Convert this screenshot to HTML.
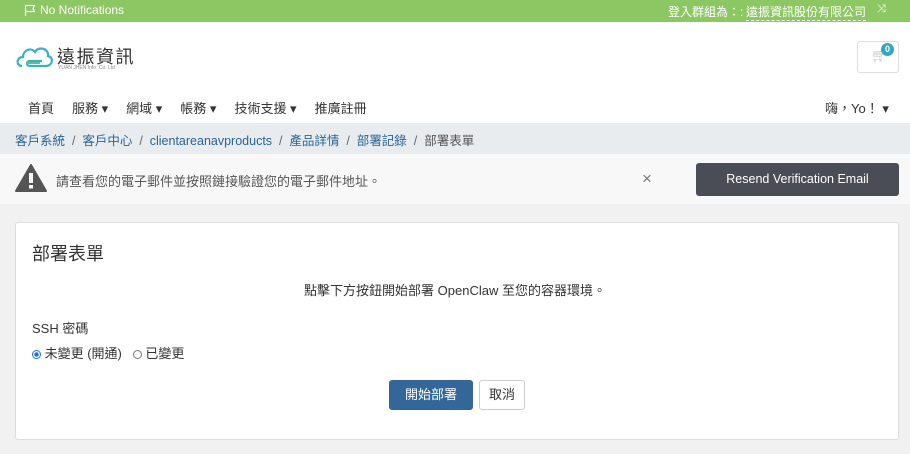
<!DOCTYPE html>
<html><head><meta charset="utf-8"><style>
*{box-sizing:border-box;margin:0;padding:0}
body{width:910px;height:454px;overflow:hidden;background:#f1f1f1;font-family:"Liberation Sans","Noto Sans CJK TC",sans-serif;font-size:13px;color:#333;position:relative}
.abs{position:absolute}
</style></head><body>
<div class="abs" style="left:0;top:0;width:910px;height:22px;background:#8dc763;color:#fff;font-size:12px">
 <svg class="abs" style="left:24px;top:4px" width="12" height="13" viewBox="0 0 12 13"><path d="M1.5 1v11M1.5 1.5h9l-1.5 3 1.5 3h-9" fill="none" stroke="#fff" stroke-width="1.2"/></svg>
 <span class="abs" style="left:40px;top:3px">No Notifications</span>
 <span class="abs" style="left:668px;top:3px">登入群組為：:</span>
 <span class="abs" style="left:746px;top:3px;border-bottom:1px dashed #fff">遠振資訊股份有限公司</span>
 <span class="abs" style="left:877px;top:3px;font-size:11px">⤨</span>
</div>
<div class="abs" style="left:0;top:22px;width:910px;height:101px;background:#fff"></div>
<svg class="abs" style="left:16px;top:44px" width="38" height="26" viewBox="0 0 38 26"><path d="M6 22 C0 22 0 13 7 13 C7 6 15 3 19 8 C22 2 33 4 32 12 C38 13 37 22 30 22 H14 C10 22 10 17 14 17 H26" fill="none" stroke="#3ab0c8" stroke-width="2.2"/><path d="M10 19 H24" stroke="#5bc08a" stroke-width="2"/></svg>
<div class="abs" style="left:57px;top:43px;font-size:18px;letter-spacing:1.5px;color:#333">遠振資訊</div>
<div class="abs" style="left:58px;top:65px;font-size:5px;color:#888">YUAN JHEN Info. Co. Ltd</div>
<div class="abs" style="left:857px;top:41px;width:42px;height:32px;border:1px solid #ddd;border-radius:3px;background:#fff"></div>
<span class="abs" style="left:871px;top:48px;color:#ccc;font-size:13px">🛒︎</span>
<div class="abs" style="left:881px;top:43px;width:13px;height:13px;border-radius:50%;background:#2fa8c4;color:#fff;font-size:9px;text-align:center;line-height:13px;font-weight:bold">0</div>
<div class="abs" style="left:28px;top:98px;font-size:13px;color:#333">
<span style="margin-right:18px">首頁</span><span style="margin-right:18px">服務 ▾</span><span style="margin-right:18px">網域 ▾</span><span style="margin-right:18px">帳務 ▾</span><span style="margin-right:18px">技術支援 ▾</span><span>推廣註冊</span></div>
<div class="abs" style="left:825px;top:98px">嗨，Yo！ ▾</div>
<div class="abs" style="left:0;top:123px;width:910px;height:31px;background:#e9ecef;padding:7px 0 0 15px;font-size:12.5px;color:#2a6496">客戶系統 <span style="color:#666">&nbsp;/&nbsp;</span> 客戶中心 <span style="color:#666">&nbsp;/&nbsp;</span> clientareanavproducts <span style="color:#666">&nbsp;/&nbsp;</span> 產品詳情 <span style="color:#666">&nbsp;/&nbsp;</span> 部署記錄 <span style="color:#666">&nbsp;/&nbsp;</span> <span style="color:#555">部署表單</span></div>
<div class="abs" style="left:0;top:154px;width:910px;height:50px;background:#f8f8f8"></div>
<svg class="abs" style="left:14px;top:163px" width="34" height="30" viewBox="0 0 34 30"><path d="M17 2 L32 28 H2 Z" fill="#555" stroke="#555" stroke-width="2" stroke-linejoin="round"/><rect x="15" y="10" width="4" height="10" fill="#f8f8f8"/><rect x="15" y="22" width="4" height="3.5" fill="#f8f8f8"/></svg>
<div class="abs" style="left:56px;top:171px;color:#555">請查看您的電子郵件並按照鏈接驗證您的電子郵件地址。</div>
<div class="abs" style="left:642px;top:169px;color:#777;font-size:17px">×</div>
<div class="abs" style="left:696px;top:163px;width:203px;height:33px;background:#4b4d56;border-radius:3px;color:#fff;text-align:center;line-height:33px;font-size:12.5px">Resend Verification Email</div>
<div class="abs" style="left:15px;top:222px;width:884px;height:218px;background:#fff;border:1px solid #ddd;border-radius:3px"></div>
<div class="abs" style="left:32px;top:240px;font-size:18px;color:#333">部署表單</div>
<div class="abs" style="left:0;top:280px;width:910px;text-align:center;font-size:13px">點擊下方按鈕開始部署 OpenClaw 至您的容器環境。</div>
<div class="abs" style="left:32px;top:318px">SSH 密碼</div>
<div class="abs" style="left:32px;top:343px">
<span style="display:inline-block;width:9px;height:9px;border-radius:50%;border:1px solid #1a73e8;background:radial-gradient(#1a73e8 40%,#fff 50%);vertical-align:-1px"></span> 未變更 (開通) &nbsp;
<span style="display:inline-block;width:9px;height:9px;border-radius:50%;border:1px solid #777;vertical-align:-1px"></span> 已變更</div>
<div class="abs" style="left:389px;top:380px;width:84px;height:30px;background:#336699;border-radius:3px;color:#fff;text-align:center;line-height:30px">開始部署</div>
<div class="abs" style="left:479px;top:380px;width:46px;height:30px;background:#fff;border:1px solid #ccc;border-radius:3px;text-align:center;line-height:28px">取消</div>
</body></html>
